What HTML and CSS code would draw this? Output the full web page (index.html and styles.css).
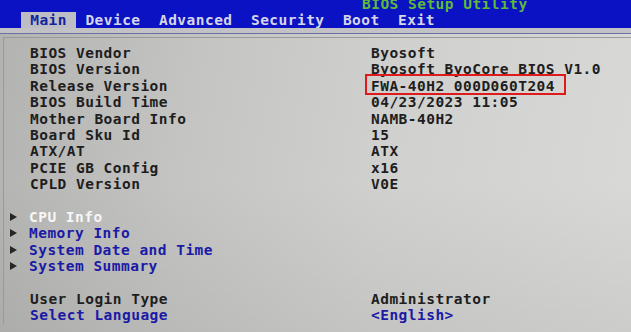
FILE: index.html
```html
<!DOCTYPE html>
<html lang="en">
<head>
  <meta charset="UTF-8" />
  <meta name="viewport" content="width=device-width, initial-scale=1.0"/>
  <title>BIOS Setup Utility</title>
  <link rel="stylesheet" href="styles.css">
</head>
<body>
  <div class="top">
    <div class="title">BIOS Setup Utility</div>
    <div class="tabs">
      <span class="tab active">Main</span>
      <span class="tab">Device</span>
      <span class="tab">Advanced</span>
      <span class="tab">Security</span>
      <span class="tab">Boot</span>
      <span class="tab">Exit</span>
    </div>
  </div>
  <div class="sep"></div>

  <div class="frame">
    <div class="rows">
      <span>BIOS Vendor</span><span>Byosoft</span>
      <span>BIOS Version</span><span>Byosoft ByoCore BIOS V1.0</span>
      <span>Release Version</span><span><span class="mark">FWA-40H2 000D060T204</span></span>
      <span>BIOS Build Time</span><span>04/23/2023 11:05</span>
      <span>Mother Board Info</span><span>NAMB-40H2</span>
      <span>Board Sku Id</span><span>15</span>
      <span>ATX/AT</span><span>ATX</span>
      <span>PCIE GB Config</span><span>x16</span>
      <span>CPLD Version</span><span>V0E</span>
    </div>

    <div class="menu">
      <div class="sub current">CPU Info</div>
      <div class="sub">Memory Info</div>
      <div class="sub">System Date and Time</div>
      <div class="sub">System Summary</div>
    </div>

    <div class="rows">
      <span>User Login Type</span><span>Administrator</span>
      <span class="link">Select Language</span><span class="link">&lt;English&gt;</span>
    </div>
  </div>
</body>
</html>
```

FILE: styles.css
```css
html, body {
  margin: 0;
  height: 100%;
}

body {
  width: 631px;
  height: 332px;
  overflow: hidden;
  font-family: "DejaVu Sans Mono", "Liberation Mono", monospace;
  font-weight: bold;
  font-size: 14.5px;
  letter-spacing: 0.47px;
  color: #1e1e1e;
  background:
    linear-gradient(180deg, rgba(0,0,0,0) 55%, rgba(0,0,0,0.06) 100%),
    linear-gradient(100deg, #b2b2b0 0%, #c4c4c2 30%, #d0d0ce 60%, #d9d9d7 100%);
}

.top {
  height: 28px;
  background: #0b12c4;
  overflow: hidden;
}

.title {
  margin-top: -2px;
  height: 13px;
  line-height: 13px;
  padding-left: 362px;
  color: #5cbc36;
}

.tabs {
  display: flex;
  padding: 1px 0 0 21px;
}

.tab {
  padding: 0 9.2px;
  line-height: 16px;
  color: #d6d6ea;
}

.tab.active {
  background: #bdbdc6;
  color: #14249c;
}

.sep {
  height: 5px;
  background: #c2c2c6;
  border-bottom: 1px solid #6e6ea0;
}

.frame {
  margin: 3px 0 0 3px;
  padding: 7px 0 0 26px;
  border-top: 1px solid #9a9a9c;
  border-left: 1px solid #9a9a9c;
  line-height: 16.4px;
}

.rows {
  display: grid;
  grid-template-columns: 341px 1fr;
}

.menu {
  margin: 16.4px 0;
}

.sub {
  color: #1a1aa6;
}

.sub::before {
  content: "";
  display: inline-block;
  margin: 0 12px 1px -20px;
  border-left: 7px solid #262626;
  border-top: 4px solid transparent;
  border-bottom: 4px solid transparent;
  vertical-align: 0;
}

.sub.current {
  color: #f6f6f6;
}

.link {
  color: #1a1aa6;
}

.mark {
  position: relative;
  display: inline-block;
}

.mark::after {
  content: "";
  position: absolute;
  left: -6px;
  right: -11px;
  top: -4px;
  bottom: -1px;
  border: 2px solid #e01a1a;
}
```
